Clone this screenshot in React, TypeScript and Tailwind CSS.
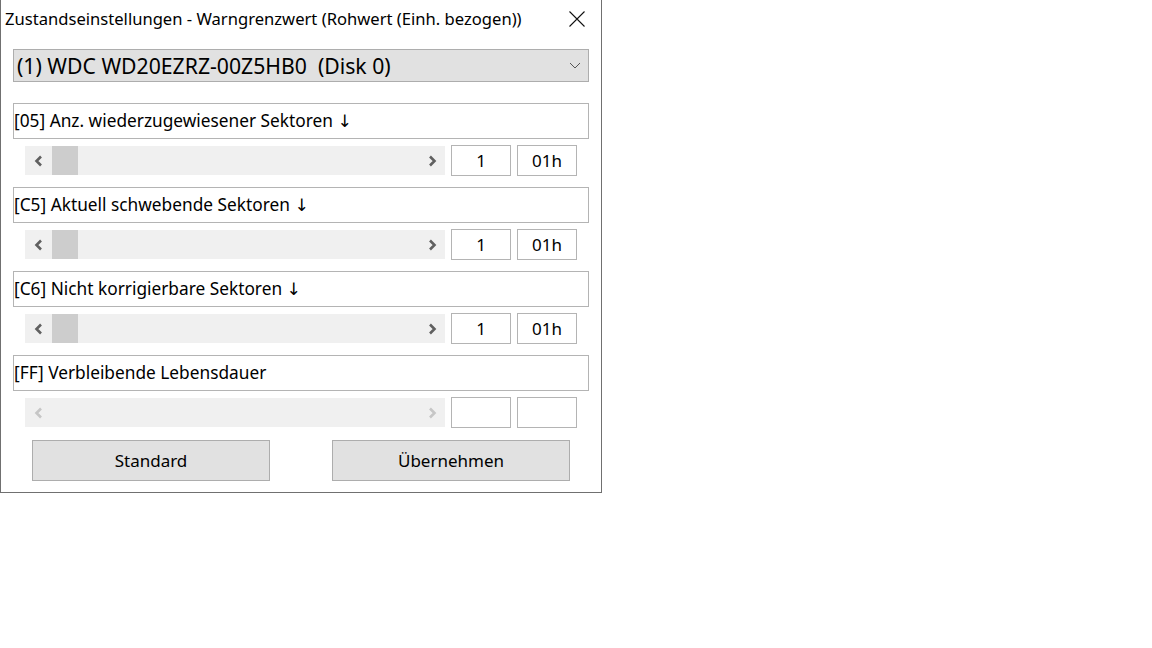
import React from "react";

type Row = {
  label: string;
  value?: string;
  hex?: string;
  disabled?: boolean;
};

const rows: Row[] = [
  { label: "[05] Anz. wiederzugewiesener Sektoren ↓", value: "1", hex: "01h" },
  { label: "[C5] Aktuell schwebende Sektoren ↓", value: "1", hex: "01h" },
  { label: "[C6] Nicht korrigierbare Sektoren ↓", value: "1", hex: "01h" },
  { label: "[FF] Verbleibende Lebensdauer", disabled: true },
];

function Arrow({ dir, disabled }: { dir: "left" | "right"; disabled?: boolean }) {
  const d = dir === "left" ? "M7 1.5 L2.5 6 L7 10.5" : "M3 1.5 L7.5 6 L3 10.5";
  return (
    <svg width="10" height="12" viewBox="0 0 10 12" className="shrink-0">
      <path d={d} fill="none" stroke={disabled ? "#c6c6c6" : "#606060"} strokeWidth="2.6" />
    </svg>
  );
}

function ScrollRow({ row }: { row: Row }) {
  return (
    <div className="ml-[12px] flex h-[31px] items-center gap-[6px]">
      <div className="flex h-[29px] w-[420px] items-center bg-[#f0f0f0]">
        <div className="flex w-[27px] justify-center">
          <Arrow dir="left" disabled={row.disabled} />
        </div>
        {!row.disabled && <div className="h-full w-[26px] bg-[#cdcdcd]" />}
        <div className="flex-1" />
        <div className="flex w-[27px] justify-center">
          <Arrow dir="right" disabled={row.disabled} />
        </div>
      </div>
      <div className="flex h-[31px] w-[60px] items-center justify-center border border-[#b4b4b4] bg-white text-[17px]">
        {row.value}
      </div>
      <div className="flex h-[31px] w-[60px] items-center justify-center border border-[#b4b4b4] bg-white text-[17px]">
        {row.hex}
      </div>
    </div>
  );
}

export default function App() {
  return (
    <div className="h-[648px] w-[1152px] bg-white text-black" style={{ fontFamily: "'Noto Sans', 'DejaVu Sans', sans-serif" }}>
      <div className="flex h-[493px] w-[602px] flex-col border-x border-b border-[#707070] bg-white">
        <div className="flex h-[49px] items-start justify-between">
          <div className="pl-[4px] pt-[7px] text-[16.6px] leading-[24px]">
            Zustandseinstellungen - Warngrenzwert (Rohwert (Einh. bezogen))
          </div>
          <svg width="16" height="16" viewBox="0 0 16 16" className="mr-[16px] mt-[11px]">
            <path d="M0.5 0.5 L15.5 15.5 M15.5 0.5 L0.5 15.5" stroke="#111" strokeWidth="1.1" />
          </svg>
        </div>
        <div className="flex flex-col pl-[12px] pr-[12px]">
          <div className="flex h-[33px] items-center justify-between border border-[#adadad] bg-[#e1e1e1] pl-[3px] pr-[7px]">
            <span className="whitespace-pre text-[21.2px] leading-[28px]">(1) WDC WD20EZRZ-00Z5HB0  (Disk 0)</span>
            <svg width="12" height="7" viewBox="0 0 12 7">
              <path d="M1 1 L6 6 L11 1" fill="none" stroke="#555" strokeWidth="1" />
            </svg>
          </div>
          <div className="mt-[21px] flex flex-col">
            {rows.map((row, i) => (
              <div key={i} className={i > 0 ? "mt-[11px]" : ""}>
                <div className="flex h-[36px] items-center border border-[#b4b4b4] bg-white text-[17.3px]">
                  {row.label}
                </div>
                <div className="mt-[6px]">
                  <ScrollRow row={row} />
                </div>
              </div>
            ))}
          </div>
          <div className="ml-[19px] mt-[12px] flex gap-[62px]">
            <div className="flex h-[41px] w-[238px] items-center justify-center border border-[#adadad] bg-[#e1e1e1] text-[17px]">
              Standard
            </div>
            <div className="flex h-[41px] w-[238px] items-center justify-center border border-[#adadad] bg-[#e1e1e1] text-[17px]">
              Übernehmen
            </div>
          </div>
        </div>
      </div>
    </div>
  );
}
